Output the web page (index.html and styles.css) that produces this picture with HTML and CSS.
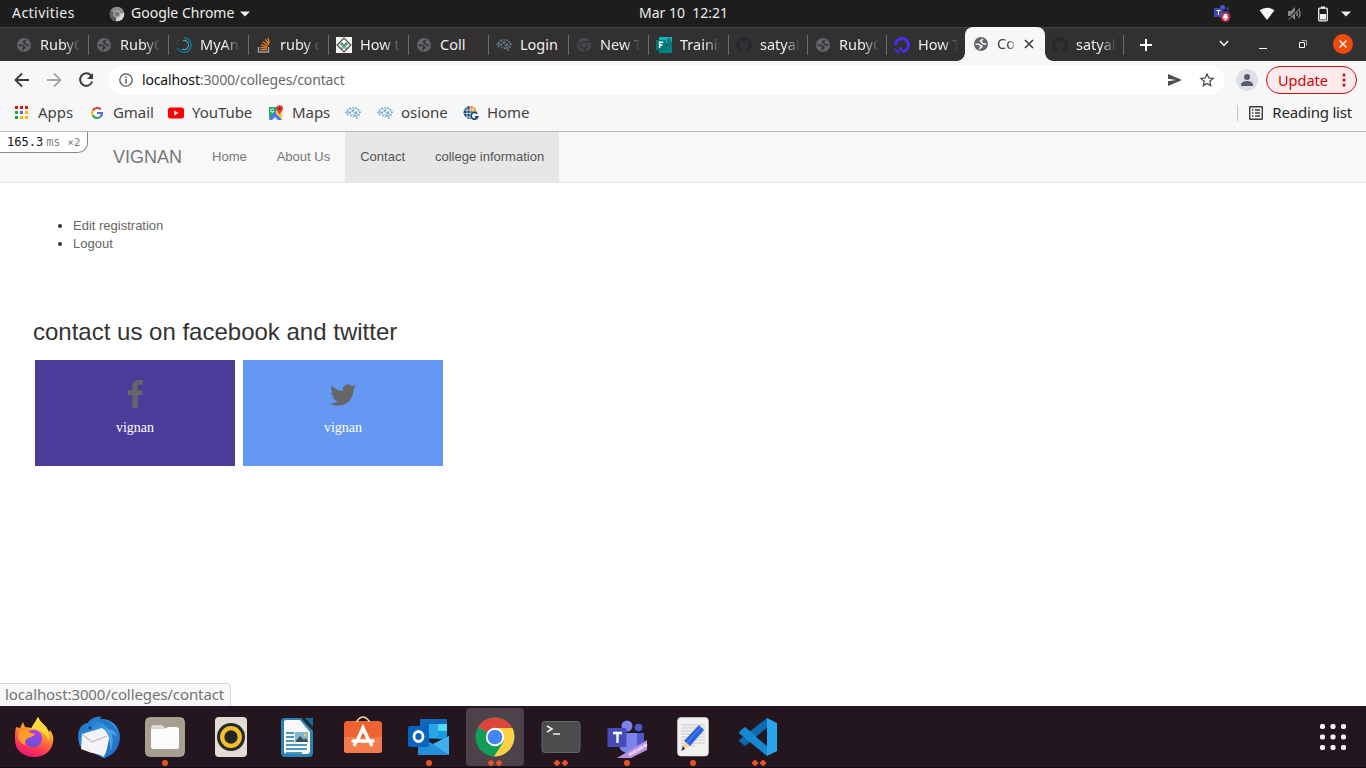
FILE: index.html
```html
<!DOCTYPE html>
<html lang="en">
<head>
<meta charset="utf-8">
<title>Colleges</title>
<link rel="stylesheet" href="styles.css">
</head>
<body>
<svg class="defs" width="0" height="0">
  <symbol id="globe" viewBox="0 0 16 16"><circle cx="8" cy="8" r="7" stroke="none"/><path d="M2.600 8.200h3q1.700 0 1.700 1.500h1.300q.8 1.500-1 1.800-.9.300-.9 2M9.800 2.800q-.8 1.500-2.300 1.700-.4 1.200 1.300 1.500 .4 1.900 2.300 1.900l2.200.4" fill="none" stroke-width="1.500"/></symbol>
  <symbol id="github" viewBox="0 0 16 16"><path d="M8 0C3.580 0 0 3.580 0 8c0 3.540 2.290 6.530 5.470 7.590.4.070.55-.17.55-.38 0-.19-.01-.82-.01-1.490-2.010.37-2.530-.49-2.690-.94-.09-.23-.48-.94-.82-1.130-.28-.15-.68-.52-.01-.53.630-.01 1.080.58 1.230.82.720 1.210 1.870.87 2.330.66.070-.52.280-.87.510-1.070-1.780-.2-3.640-.89-3.640-3.950 0-.87.310-1.590.820-2.150-.08-.2-.36-1.020.08-2.120 0 0 .67-.21 2.200.82.640-.18 1.320-.27 2-.27s1.360.09 2 .27c1.530-1.040 2.200-.82 2.200-.82.440 1.100.160 1.920.080 2.120.510.560.820 1.270.820 2.150 0 3.070-1.870 3.750-3.650 3.950.290.250.540.730.540 1.480 0 1.070-.01 1.930-.01 2.200 0 .210.150.460.550.380A8.010 8.010 0 0 0 16 8c0-4.420-3.580-8-8-8z" fill="#24292f"/></symbol>
  <symbol id="brain" viewBox="0 0 16 16"><g fill="currentColor"><circle cx="1" cy="7.500" r=".8"/><circle cx="2.500" cy="5.500" r=".9"/><circle cx="5" cy="3.500" r=".9"/><circle cx="8" cy="2.700" r=".8"/><circle cx="11" cy="3.200" r=".9"/><circle cx="13.500" cy="4.800" r=".8"/><circle cx="15" cy="7.200" r=".9"/><circle cx="14" cy="9.800" r=".9"/><circle cx="11.500" cy="11" r=".9"/><circle cx="12" cy="13.300" r=".8"/><circle cx="8.700" cy="11.300" r=".9"/><circle cx="6" cy="10.700" r=".8"/><circle cx="2.500" cy="9.500" r=".9"/><circle cx="5" cy="7.500" r="1"/><circle cx="8" cy="5.800" r="1"/><circle cx="11" cy="7.500" r="1"/></g><path d="M1 7.500L5 3.500l3 2.300 3-2.600 4 4-3.500 3.800L8 5.800 5 7.500l-2.500 2M2.500 5.500L5 7.500l1 3.200 5-3.200 2.500-2.700M8 2.700v3.100M8.700 11.300l2.300-3.800 3 2.300M12 13.300l-.5-2.300-2.800.3M1 7.500h4" fill="none" stroke="currentColor" stroke-width=".55"/></symbol>
</svg>

<header class="system-bar">
  <span class="activities">Activities</span>
  <svg class="app-icon" width="16" height="16" viewBox="0 0 16 16"><circle cx="8" cy="8" r="7.300" fill="#8b8b8b"/><path d="M8 8L1.500 4.500A7.300 7.300 0 0 0 7 15.200z" fill="#606060"/><path d="M8 8l7.200-1A7.300 7.300 0 0 1 7 15.200z" fill="#d5d5d5"/><circle cx="8" cy="8" r="3.600" fill="#bbb"/><circle cx="8" cy="8" r="2.600" fill="#777"/></svg>
  <span class="app-name">Google Chrome</span>
  <svg width="10" height="6" viewBox="0 0 10 6"><path d="M0 .5h10L5 5.500z" fill="#f2f2f2"/></svg>
  <time class="clock">Mar 10&nbsp; 12:21</time>
  <div class="tray">
    <svg class="tray-teams" width="17" height="17" viewBox="0 0 17 17"><circle cx="8.500" cy="2.600" r="2.500" fill="#5059c9"/><circle cx="13.500" cy="3.500" r="1.600" fill="#353b8d"/><path d="M7 6h8v6H7z" fill="#30357c"/><rect y="3" width="9" height="9" rx=".8" fill="#4046b3"/><path d="M2.500 5.500h4M4.500 5.500v4.500" stroke="#fff" stroke-width="1.100"/><circle cx="11.500" cy="12" r="4.800" fill="#c4314b"/><path d="M8.600 13.400c1-1 .5-4.600 2.900-4.600s1.900 3.600 2.900 4.600zM10.400 14h2.200v1.200h-2.200z" fill="#fff"/></svg>
    <svg class="tray-wifi" width="16" height="14" viewBox="0 0 16 14"><path d="M.5 3.300Q8-1.800 15.500 3.300L8 13z" fill="#f5f5f5"/></svg>
    <svg class="tray-mute" width="16" height="15" viewBox="0 0 16 15"><path d="M1 5h3l4-4v13l-4-4H1z" fill="#858585"/><path d="M9.500 5q2 2.500 0 5M11.500 3q3 4.500 0 9" fill="none" stroke="#858585" stroke-width="1.200"/><path d="M1 13.500L13 1" stroke="#1d1d1d" stroke-width="1.600"/><path d="M1.500 14L13 2" stroke="#858585"/></svg>
    <svg class="tray-battery" width="10" height="16" viewBox="0 0 10 16"><path d="M3 .5h4v2H3z" fill="#f2f2f2"/><rect x=".7" y="2.200" width="8.600" height="12.600" rx="1" fill="none" stroke="#f2f2f2" stroke-width="1.300"/><path d="M2 8h6v5.500H2z" fill="#f2f2f2"/></svg>
    <svg width="10" height="6" viewBox="0 0 10 6"><path d="M0 .5h10L5 5.500z" fill="#f2f2f2"/></svg>
  </div>
</header>

<nav class="tab-strip">
  <div class="tab"><svg class="fav globe"><use href="#globe"/></svg><span>RubyOn</span></div>
  <div class="tab"><svg class="fav globe"><use href="#globe"/></svg><span>RubyOn</span></div>
  <div class="tab"><svg class="fav" viewBox="0 0 16 16" fill="none" stroke="#087b90"><path d="M8 .8a7.200 7.200 0 1 1-6.700 10" stroke-width="1.400"/><path d="M7 3.500a4.600 4.600 0 1 1-1 8.600" stroke="#56a0b0" stroke-width="1.100"/><path d="M1 8a7 7 0 0 1 3-6" stroke="#35545e"/></svg><span>MyAna</span></div>
  <div class="tab"><svg class="fav" viewBox="0 0 16 16" fill="none"><path d="M2.500 10v5h10v-5" stroke="#9b9da0" stroke-width="1.500"/><path d="M4.300 12.600h6.500M4.400 10.300l6.500.8M5.200 7.600l6 2.200M6.800 4.800l5.200 3.700M9.300 2.300l3.700 5M12 .8l1.200 5.500" stroke="#f48024" stroke-width="1.300"/></svg><span>ruby on</span></div>
  <div class="tab"><svg class="fav" viewBox="0 0 16 16"><path d="M0 0h16v16H0z" fill="#f5f5f2"/><path d="M8 1.200L14.800 8 8 14.800 1.200 8z" fill="#fff" stroke="#404943" stroke-width="1.200"/><path d="M4.500 7.200l3.500 3 3.500-3-1-1.500-2.500 2-2.500-2zM5 11h6" fill="#6aaf8b" stroke="#246448" stroke-width=".8"/></svg><span>How to</span></div>
  <div class="tab"><svg class="fav globe"><use href="#globe"/></svg><span>Coll</span></div>
  <div class="tab"><svg class="fav brain-dark"><use href="#brain"/></svg><span>Login</span></div>
  <div class="tab"><svg class="fav" viewBox="0 0 16 16"><circle cx="8" cy="8" r="7" fill="#45484d"/><g fill="none" stroke="#333031" stroke-width="1.200"><circle cx="8" cy="8" r="3.400"/><path d="M8 4.600h6.300M5 9.600L2 4.400M11 9.600L8 15"/></g></svg><span>New Tab</span></div>
  <div class="tab"><svg class="fav" viewBox="0 0 16 16"><path d="M3 0h13v7H3z" fill="#10b4bd"/><path d="M11 5h5v6h-5z" fill="#0d7378"/><path d="M3 10h13v6H3z" fill="#078386"/><circle cx="13" cy="3.500" r="2.200" fill="#177c82"/><path d="M0 3h10v10H0z" fill="#00797c"/><path d="M3.600 11V5.200h3.700M3.600 8h3" fill="none" stroke="#fff" stroke-width="1.400"/></svg><span>Trainin</span></div>
  <div class="tab narrow"><svg class="fav"><use href="#github"/></svg><span>satyak</span></div>
  <div class="tab narrow"><svg class="fav globe"><use href="#globe"/></svg><span>RubyOn</span></div>
  <div class="tab narrow before-active"><svg class="fav" viewBox="0 0 16 16"><path d="M1.500 8A6.500 6.500 0 1 1 8 14.500" fill="none" stroke="#4b2df2" stroke-width="3"/><path d="M5 10.500h3v3H5zM2.500 13.500H5V16H2.500zM.5 11.500h2v2h-2z" fill="#4b2df2"/></svg><span>How To</span></div>
  <div class="tab active"><svg class="fav globe"><use href="#globe"/></svg><span>Coll</span><svg class="tab-close" width="10" height="10" viewBox="0 0 10 10"><path d="M1 1l8 8M9 1L1 9" stroke="#3c3c3c" stroke-width="1.600"/></svg></div>
  <div class="tab last"><svg class="fav"><use href="#github"/></svg><span>satyak</span></div>
  <svg class="new-tab" width="12" height="12" viewBox="0 0 12 12"><path d="M6 0v12M0 6h12" stroke="#fff" stroke-width="2"/></svg>
  <div class="window-controls">
    <svg width="10" height="7" viewBox="0 0 10 7"><path d="M.8 1L5 5.400 9.200 1" fill="none" stroke="#eee" stroke-width="1.600"/></svg>
    <svg width="8" height="8" viewBox="0 0 8 8"><path d="M0 6.500h8" stroke="#fff"/></svg>
    <svg width="8" height="8" viewBox="0 0 8 8" fill="none"><path d="M.5 2.500h5v5h-5z" stroke="#fff"/><path d="M2.500.5h5v5" stroke="#aaa"/></svg>
    <svg width="20" height="20" viewBox="0 0 20 20"><circle cx="10" cy="10" r="10" fill="#f04b06"/><path d="M6.500 6.500l7 7M13.500 6.500l-7 7" stroke="#fff" stroke-width="1.400"/></svg>
  </div>
</nav>

<div class="toolbar">
  <svg class="back" width="16" height="16" viewBox="0 0 16 16" fill="none" stroke="#3b3b3b" stroke-width="1.800"><path d="M15 8H2M8 1.500L1.500 8 8 14.500"/></svg>
  <svg class="forward" width="16" height="16" viewBox="0 0 16 16" fill="none" stroke="#a7a7a7" stroke-width="1.800"><path d="M1 8h13M8 1.500L14.500 8 8 14.500"/></svg>
  <svg class="reload" width="16" height="16" viewBox="0 0 16 16"><path d="M13 3.500A6.200 6.200 0 1 0 14.200 9.500" fill="none" stroke="#3b3b3b" stroke-width="2"/><path d="M15 1v6H9z" fill="#3b3b3b"/></svg>
  <div class="omnibox">
    <svg width="14" height="14" viewBox="0 0 14 14"><circle cx="7" cy="7" r="6.200" fill="none" stroke="#565656" stroke-width="1.300"/><path d="M7 6v4.500M7 3.300v1.500" stroke="#565656" stroke-width="1.500"/></svg>
    <span class="url"><b>localhost</b>:3000/colleges/contact</span>
    <svg class="send" width="14" height="12" viewBox="0 0 14 12"><path d="M0 0l14 6-14 6V7.300L8 6 0 4.700z" fill="#4c4c4c"/></svg>
    <svg class="star" width="16" height="16" viewBox="0 0 16 16"><path d="M8 2l1.800 4 4.300.4-3.300 2.900.9 4.300L8 11.400l-3.700 2.200.9-4.300-3.300-2.900L6.200 6z" fill="none" stroke="#4b4b4b" stroke-width="1.300"/></svg>
  </div>
  <svg class="profile" width="22" height="22" viewBox="0 0 22 22"><circle cx="11" cy="11" r="11" fill="#dfe0e5"/><circle cx="11" cy="8" r="3" fill="#565b72"/><path d="M5 17v-1.500c0-2.500 4-3.500 6-3.500s6 1 6 3.500V17z" fill="#565b72"/></svg>
  <div class="update"><span>Update</span><svg width="4" height="14" viewBox="0 0 4 14" fill="#d1060b"><circle cx="2" cy="2" r="1.500"/><circle cx="2" cy="7" r="1.500"/><circle cx="2" cy="12" r="1.500"/></svg></div>
</div>

<div class="bookmarks">
  <a><svg viewBox="0 0 16 16"><path d="M1 1h3v3H1zM6 1h3v3H6zM11 1h3v3h-3z" fill="#f00d12"/><path d="M1 6h3v3H1z" fill="#12a63e"/><path d="M6 6h3v3H6z" fill="#5865f2"/><path d="M11 6h3v3h-3zM6 11h3v3H6zM11 11h3v3h-3z" fill="#f9b90a"/><path d="M1 11h3v3H1z" fill="#12a63e"/></svg><span>Apps</span></a>
  <a><svg viewBox="0 0 16 16" fill="none" stroke-width="2.200"><circle cx="8" cy="8" r="8" fill="#fff"/><path d="M11.800 4.500A5 5 0 0 0 3.700 5.700" stroke="#ea4335"/><path d="M3.700 5.700a5 5 0 0 0 0 4.700" stroke="#fbbc05"/><path d="M3.700 10.400a5 5 0 0 0 7.200 1.700" stroke="#34a853"/><path d="M8 8h5a5 5 0 0 1-2.100 4.100" stroke="#4d68f4"/></svg><span>Gmail</span></a>
  <a><svg viewBox="0 0 16 16"><rect y="2.500" width="16" height="11" rx="2.500" fill="#f00"/><path d="M6.200 5.500v5L10.500 8z" fill="#fff"/></svg><span>YouTube</span></a>
  <a class="maps"><svg viewBox="0 0 16 16"><path d="M1 2h13v13H1z" fill="#e4e8ec"/><path d="M1 2h9l-3 7-6 5z" fill="#28a766"/><path d="M1 14l6-7 7 8H2z" fill="#4b77ed"/><path d="M4 15l3-3 3 3z" fill="#f3f3f3"/><path d="M10 4l4 4v6L8 8z" fill="#fac61c"/><path d="M11.500 10C11 7.500 8.200 6.200 8.200 3.600a3.400 3.400 0 0 1 6.800 0C15 6.200 12 7.500 11.500 10z" fill="#e33b32"/><circle cx="11.600" cy="3.600" r="1.200" fill="#861e18"/><path d="M5.800 4.500a1.700 1.700 0 1 0 .2 1.700H4.500" fill="none" stroke="#fff"/></svg><span>Maps</span></a>
  <a><svg class="brain-light"><use href="#brain"/></svg></a>
  <a><svg class="brain-light"><use href="#brain"/></svg><span>osione</span></a>
  <a><svg viewBox="0 0 16 16"><circle cx="7" cy="7.500" r="6.500" fill="#19477b"/><path d="M7 1a6.500 6.500 0 0 1 6.300 5.500H7z" fill="#f5961e"/><path d="M1 5h11M.5 8.500h9M2 12h7M4 2v11M7 1v13M10 2v7" stroke="#f7f7f7" stroke-width=".7"/><circle cx="11.500" cy="11" r="4.500" fill="#f7f7f7"/><path d="M14.200 8.800a3.400 3.400 0 1 0 .5 3H12" fill="none" stroke="#19477b" stroke-width="1.700"/></svg><span>Home</span></a>
  <a class="reading"><svg viewBox="0 0 16 16" fill="none" stroke="#3c3c3c"><rect x="1.700" y="1.700" width="12.600" height="12.600" rx=".5" stroke-width="1.400"/><path d="M4 5h1.500M7 5h5M4 8h1.500M7 8h5M4 11h1.500M7 11h5" stroke-width="1.400"/></svg><span>Reading list</span></a>
</div>

<main class="page">
  <nav class="navbar">
    <a class="brand">VIGNAN</a>
    <a>Home</a>
    <a>About Us</a>
    <a class="current">Contact</a>
    <a class="current">college information</a>
  </nav>
  <div class="profiler">165.3<span class="unit">ms</span><span class="count">×2</span></div>
  <ul class="account">
    <li><a>Edit registration</a></li>
    <li><a>Logout</a></li>
  </ul>
  <h3>contact us on facebook and twitter</h3>
  <div class="cards">
    <div class="card facebook"><svg width="15" height="28" viewBox="479 0 864 1664" preserveAspectRatio="none"><path d="M1343 12v264h-157q-86 0-116 36t-30 108v189h293l-39 296h-254v759h-306v-759h-255v-296h255v-218q0-186 104-288.500t277-102.500q147 0 228 12z" fill="#666"/></svg><p>vignan</p></div>
    <div class="card twitter"><svg width="26" height="28" viewBox="0 -40 512 552"><path d="M459.370 151.716c.325 4.548.325 9.097.325 13.645 0 138.720-105.583 298.558-298.558 298.558-59.452 0-114.680-17.219-161.137-47.106 8.447.974 16.568 1.299 25.340 1.299 49.055 0 94.213-16.568 130.274-44.832-46.132-.975-84.792-31.188-98.112-72.772 6.498.974 12.995 1.624 19.818 1.624 9.421 0 18.843-1.300 27.614-3.573-48.081-9.747-84.143-51.980-84.143-102.985v-1.299c13.969 7.797 30.214 12.670 47.431 13.319-28.264-18.843-46.781-51.005-46.781-87.391 0-19.492 5.197-37.360 14.294-52.954 51.655 63.675 129.300 105.258 216.365 109.807-1.624-7.797-2.599-15.918-2.599-24.040 0-57.828 46.782-104.934 104.934-104.934 30.213 0 57.502 12.670 76.670 33.137 23.715-4.548 46.456-13.320 66.599-25.340-7.798 24.366-24.366 44.833-46.132 57.827 21.117-2.273 41.584-8.122 60.426-16.243-14.292 20.791-32.161 39.308-52.628 54.253z" fill="#666"/></svg><p>vignan</p></div>
  </div>
  <div class="status">localhost:3000/colleges/contact</div>
</main>

<footer class="dock">
  <div class="launcher"><svg viewBox="0 0 44 44"><defs><linearGradient id="ff" x1=".75" y1="0" x2=".35" y2="1"><stop stop-color="#ffee46"/><stop offset=".4" stop-color="#ff9a27"/><stop offset=".7" stop-color="#ff4350"/><stop offset="1" stop-color="#e91577"/></linearGradient><linearGradient id="fp" x1=".7" y1="0" x2=".2" y2="1"><stop stop-color="#b63af2"/><stop offset="1" stop-color="#5a56d6"/></linearGradient></defs><path d="M5 12l4 1 3-6 2 5 7 1c2-1 4-6 6-11 2 5 7 8 9 11l2 4 1-2c3 4 4 8 3 12-1 9-9 15-19 15-11 0-19-7-19-17 0-5 0-9 1-13z" fill="url(#ff)"/><path d="M20 14c2-5 5-8 7-12 2 5 7 8 9 12 2 4 3 8 2 12-3-8-9-12-18-12z" fill="#ffd83b"/><circle cx="22.500" cy="23.500" r="8.700" fill="url(#fp)"/><path d="M8 16c4-1 7-1 10 1l6 2c-1 3-5 3-7 4-3 2-4 4-2 7-5-1-8-5-8-9z" fill="#ff9f27"/></svg></div>
  <div class="launcher"><svg viewBox="0 0 44 44"><defs><linearGradient id="tb" x1="0" y1="0" x2="1" y2="1"><stop stop-color="#1c65c0"/><stop offset=".5" stop-color="#369be2"/><stop offset="1" stop-color="#153e9d"/></linearGradient></defs><path d="M3 31C-2 17 4 8 11 8c2-5 9-7 14-6l-3 2c12-1 21 7 21 18 0 12-8 20-17 21z" fill="url(#tb)"/><path d="M5 19L25 13l8 6-5 24c-6-5-11-4-16-6l-8-3z" fill="#f4f3f7"/><path d="M5 19l10 8 15-6" fill="none" stroke="#c4c5d1" stroke-width="1.500"/><path d="M7 20C6 8 15 4 25 8c10 5 12 16 1 35 14-4 18-16 14-26C36 6 26 2 17 6 9 8 5 13 7 20z" fill="#2477ca"/><path d="M27 14c8-1 12 3 13 8-2-2-4-3-6-3 3 5 2 12-1 17 1-9-1-16-6-22z" fill="#49a3df"/><circle cx="13" cy="13" r="1.400" fill="#103a6d"/></svg></div>
  <div class="launcher one"><svg viewBox="0 0 44 44"><rect x="2.700" y="2.700" width="38.600" height="38.600" rx="4" fill="#a69e8e" stroke="#bab3a4"/><path d="M8 13q0-3 3-3h8l3 3h12v6H8z" fill="#dcd9ce"/><path d="M8 16q0-2 3-2h11l3-2h8q3 0 3 3v17q0 2-2 2H10q-2 0-2-2z" fill="#fbfbfb"/></svg></div>
  <div class="launcher"><svg viewBox="0 0 44 44"><rect x="6" y="2" width="32" height="40" rx="4" fill="#e1ddd2"/><circle cx="22" cy="22" r="14" fill="#27282a"/><circle cx="22" cy="22" r="8.800" fill="none" stroke="#f3bf2a" stroke-width="4.200"/><circle cx="22" cy="22" r="4.500" fill="#242424"/></svg></div>
  <div class="launcher"><svg viewBox="0 0 44 44"><rect x="6" y="3" width="32" height="39" rx="4" fill="#2a82b2"/><path d="M9 7q0-2 2-2h14l10 12v19q0 3-3 3H12q-3 0-3-3z" fill="#f8f8f8"/><path d="M26 3l12 13V3z" fill="#212529"/><path d="M30 3h8v9z" fill="#166b9b"/><path d="M11 18h8M11 22h8M11 26h8M11 30h21M11 34h21M11 38h16" stroke="#1876a8" stroke-width="1.500"/><path d="M20 17h13v10H20z" fill="#7bb5db"/><path d="M20 27l5-6 4 4 2-2 2 4z" fill="#3f4b50"/><circle cx="30" cy="20" r="1.500" fill="#ffc344"/></svg></div>
  <div class="launcher"><svg viewBox="0 0 44 44"><rect x="3" y="6" width="38" height="32" rx="3.500" fill="#ef6333"/><path d="M3 22h38v13q0 3-3 3H6q-3 0-3-3z" fill="#f47b4b"/><path d="M16 7v-1q6-8 12 0v1" fill="none" stroke="#efd59e" stroke-width="1.700"/><path d="M16 26l6-13 6 13M12 26h20" fill="none" stroke="#fff" stroke-width="3.500" stroke-linecap="round"/><path d="M15 27l-2 4M29 27l2 4" stroke="#fff" stroke-width="3"/></svg></div>
  <div class="launcher one"><svg viewBox="0 0 44 44"><path d="M13 4h27v20H13z" fill="#1167b9"/><path d="M22 9h9v14h-9z" fill="#28a7e5"/><path d="M31 9h9v7h-9z" fill="#51d8f3"/><path d="M31 16h9v8h-9z" fill="#189bdd"/><path d="M11 20l15 9 16-8v16q0 3-3 3H11z" fill="#238fdb"/><path d="M26 29l16-8v19z" fill="#43aeec"/><rect x="1" y="11" width="21" height="21" rx="2" fill="#0763bd"/><ellipse cx="11.500" cy="21.500" rx="4.500" ry="5" fill="none" stroke="#fff" stroke-width="2.800"/></svg></div>
  <div class="launcher two selected"><svg viewBox="0 0 44 44"><circle cx="22" cy="22" r="19.500" fill="#129e59"/><path d="M22 22L5 12a20 20 0 0 1 34 0z" fill="#dd463a"/><path d="M22 13h17.500A20 20 0 0 1 21 41.500L31 26z" fill="#ffd043"/><circle cx="22" cy="22" r="9.200" fill="#fff"/><circle cx="22" cy="22" r="7.300" fill="#4285f4"/></svg></div>
  <div class="launcher two"><svg viewBox="0 0 44 44"><rect x="3" y="6.500" width="38" height="31" rx="3" fill="#4c4c4c" stroke="#5d6961"/><path d="M8 11l5 3-5 3M14 19h7" fill="none" stroke="#eee" stroke-width="1.600"/></svg></div>
  <div class="launcher one"><svg viewBox="0 0 44 44"><circle cx="22" cy="11" r="5.500" fill="#7b83eb"/><circle cx="33.500" cy="12.500" r="3.800" fill="#5059c9"/><path d="M28 18h11v12l-7 7z" fill="#5059c9"/><path d="M14 18h18v12q0 8-8 8-9 0-10-8z" fill="#7b83eb"/><rect x="2.500" y="13" width="19" height="19" rx="1.500" fill="#464cb7"/><path d="M8 18h9M12.500 18v10" stroke="#fff" stroke-width="2.300"/><path d="M12 43l30-18v10L26 43z" fill="#b990e4"/><text class="ribbon" transform="translate(25 41.500) rotate(-31)">PREVIEW</text></svg></div>
  <div class="launcher one"><svg viewBox="0 0 44 44"><rect x="6.300" y="2.300" width="31.400" height="39" rx="4" fill="#f1f1f0"/><path d="M10 10h24M10 13h24M10 16h24M10 19h24M10 22h24M10 25h24M10 28h24M10 31h14" stroke="#c8c8c8"/><path d="M28 10l5 5-14 16-6-5z" fill="#2964df"/><path d="M30 12L16 28" stroke="#5791ff"/><path d="M13 26l6 5-8 4z" fill="#ffd0a2"/><path d="M12 31l2 3-4 2z" fill="#2a3343"/></svg></div>
  <div class="launcher two"><svg viewBox="0 0 44 44"><path d="M30 3v10L8 31l-5-4q-2-1 0-3z" fill="#0b69ad"/><path d="M8 12l22 18v11L3 19q-2-1 0-3z" fill="#1688cf"/><path d="M30 3l10 5v28l-10 5z" fill="#27a5ed"/><path d="M30 13v18l-11-9z" fill="#24161f"/></svg></div>
  <svg class="app-grid" width="28" height="28" viewBox="0 0 28 28" fill="#f2f2f2"><g id="dots"><rect x="1" y="1" width="5" height="5" rx="1.700"/><rect x="11.500" y="1" width="5" height="5" rx="1.700"/><rect x="22" y="1" width="5" height="5" rx="1.700"/></g><use href="#dots" y="10.500"/><use href="#dots" y="21"/></svg>
</footer>
</body>
</html>
```
FILE: styles.css
```css
* { box-sizing: border-box; }

body {
  margin: 0;
  width: 1366px;
  height: 768px;
  overflow: hidden;
  display: flex;
  flex-direction: column;
  font: 14.5px/20px "Noto Sans", sans-serif;
  background: #fff;
}

svg { display: block; flex: none; }
.defs { position: absolute; }

/* System bar */
.system-bar {
  height: 27px;
  flex: none;
  display: grid;
  grid-template-columns: 97px 22px 109px 399px 1fr auto;
  align-items: center;
  padding: 0 15px 0 12px;
  background: #1d1d1d;
  color: #eee;
  font-size: 14px;
  white-space: nowrap;
}
.system-bar span, .clock { padding-bottom: 2px; }
.activities { letter-spacing: .45px; }
.app-name { letter-spacing: 0; }
.tray { display: flex; align-items: center; }
.tray-teams { margin-right: 28px; }
.tray-wifi { margin-right: 12px; }
.tray-mute { margin-right: 15px; }
.tray-battery { margin-right: 13px; }

/* Tabs */
.tab-strip {
  height: 34px;
  flex: none;
  display: flex;
  align-items: center;
  padding-left: 9px;
  background: #333031;
  border-top: 1px solid #454344;
}
.tab {
  width: 80px;
  height: 20px;
  flex: none;
  display: flex;
  align-items: center;
  padding-left: 7px;
  border-right: 1px solid #6c6a6b;
  color: #eee;
}
.tab.narrow { width: 79px; }
.tab.before-active { width: 78px; border-right: 0; }
.tab.last { width: 79px; }
.tab span {
  width: 41px;
  margin-left: 8px;
  padding-bottom: 2px;
  overflow: hidden;
  white-space: nowrap;
  mask-image: linear-gradient(90deg, #000 60%, transparent 98%);
}
.tab:nth-child(6) span, .tab:nth-child(7) span { mask-image: none; }
.fav { width: 16px; height: 16px; }
.globe { fill: #62656b; stroke: #333031; }
.brain-dark { color: #638499; }
.brain-light { color: #68a4cb; }
.tab.active {
  position: relative;
  height: 34px;
  margin-top: -1px;
  padding-left: 8px;
  border: 0;
  border-radius: 8px 8px 0 0;
  background: #f7f7f7;
  color: #414141;
}
.active .globe { stroke: #f7f7f7; }
.tab.active span { width: 20px; }
.tab.active::before, .tab.active::after {
  content: "";
  position: absolute;
  bottom: 0;
  width: 8px;
  height: 8px;
}
.tab.active::before { left: -8px; background: radial-gradient(circle at 0 0, transparent 7.500px, #f7f7f7 8px); }
.tab.active::after { right: -8px; background: radial-gradient(circle at 100% 0, transparent 7.500px, #f7f7f7 8px); }
.tab-close { margin-left: 7px; }
.new-tab { margin-left: 16px; }
.window-controls {
  flex: 1;
  display: flex;
  align-items: center;
  justify-content: flex-end;
  padding: 0 13px 2px 0;
}
.window-controls svg:nth-child(2) { margin-left: 30px; margin-top: 4px; }
.window-controls svg:nth-child(3) { margin-left: 32px; }
.window-controls svg:nth-child(4) { margin-left: 26px; }

/* Address row */
.toolbar {
  height: 38px;
  flex: none;
  display: flex;
  align-items: center;
  padding: 0 9px 0 14px;
  background: #f7f7f7;
}
.forward, .reload { margin-left: 16px; }
.omnibox {
  flex: 1;
  height: 30px;
  margin-left: 14px;
  padding: 0 10px 0 11px;
  display: flex;
  align-items: center;
  border-radius: 15px;
  background: #fff;
}
.url { margin-left: 9px; color: #696969; font-size: 14px; letter-spacing: -.15px; }
.url b { color: #111; font-weight: 400; }
.send { margin-left: auto; }
.star { margin-left: 17px; }
.profile { margin-left: 11px; }
.update {
  width: 91px;
  height: 28px;
  margin-left: 8px;
  padding: 0 10px 0 11px;
  display: flex;
  align-items: center;
  justify-content: space-between;
  border: 1px solid #d1060b;
  border-radius: 14px;
  background: #fce9e9;
  color: #c90b10;
}
.update span { padding-bottom: 1px; }

/* Bookmarks */
.bookmarks {
  height: 33px;
  flex: none;
  display: grid;
  grid-template-columns: 75px 79px 100px 77px 32px 86px 1fr auto;
  align-items: center;
  padding: 0 14px 5px;
  background: #f7f7f7;
  border-bottom: 1px solid #b8bab8;
  color: #424242;
  font-size: 15px;
}
.bookmarks a { display: flex; gap: 8px; align-items: center; white-space: nowrap; }
.bookmarks a span { padding-bottom: 2px; letter-spacing: -.05px; }
.bookmarks svg { width: 16px; height: 16px; }
.bookmarks .reading { padding-left: 10px; height: 16px; border-left: 1px solid #c3c3c3; color: #282828; }
.bookmarks .reading span { letter-spacing: -.2px; }

/* Page */
.page {
  flex: 1;
  position: relative;
  font: 13px/18px "Liberation Sans", sans-serif;
  color: #333;
}
.navbar {
  height: 51px;
  display: flex;
  padding-left: 98px;
  background: #f8f8f8;
  border-bottom: 1px solid #e7e7e7;
  color: #777;
}
.navbar a { padding: 15px; line-height: 20px; }
.navbar .brand { font-size: 18px; }
.navbar .current { background: #e7e7e7; color: #555; }
.profiler {
  position: absolute;
  left: 0;
  top: 0;
  width: 88px;
  height: 21px;
  padding-left: 7px;
  border: solid #888;
  border-width: 0 1px 1px 0;
  border-radius: 0 0 10px 0;
  background: #fff;
  color: #111;
  font: 12px/20px "DejaVu Sans Mono", monospace;
}
.unit { margin-left: 3px; color: #888; }
.count { margin-left: 7px; color: #777; font-size: 10.5px; }
.account { margin: 34px 0 0; padding-left: 73px; }
.account a { color: #666; }
h3 { margin: 66px 0 15px 33px; font-size: 24px; line-height: 26px; font-weight: 400; }
.cards { display: flex; gap: 8px; padding-left: 35px; }
.card {
  width: 200px;
  height: 106px;
  padding-top: 20px;
  display: flex;
  flex-direction: column;
  align-items: center;
}
.facebook { background: #4b3c9a; }
.twitter { background: #6498f3; }
.card p { margin: 10px 0 0; color: #fff; font: 14px/20px "Liberation Serif", serif; }
.status {
  position: absolute;
  left: 0;
  bottom: 0;
  height: 23px;
  width: 231px;
  padding-left: 5px;
  border: solid #d5d5d5;
  border-width: 1px 1px 0 0;
  border-radius: 0 4px 0 0;
  background: #f7f7f7;
  color: #737373;
  font: 15px/21px "Noto Sans", sans-serif;
  letter-spacing: -.1px;
}

/* Dock */
.dock {
  height: 62px;
  flex: none;
  display: flex;
  align-items: center;
  background: #24161f;
  border-bottom: 1px solid #150b12;
}
.launcher {
  width: 58px;
  height: 58px;
  margin: 0 4px;
  display: flex;
  flex-direction: column;
  align-items: center;
  padding-top: 7px;
  border-radius: 4px;
}
.launcher svg { width: 44px; height: 44px; }
.selected { background: #4d414a; }
.launcher.one::after, .launcher.two::after {
  content: "";
  width: 6px;
  height: 6px;
  margin-top: 1px;
  border-radius: 50%;
  background: #ee5220;
}
.launcher.two::after {
  width: 14px;
  border-radius: 0;
  background: radial-gradient(circle at 3px 3px, #ee5220 2.500px, transparent 3px), radial-gradient(circle at 11px 3px, #ee5220 2.500px, transparent 3px);
}
.ribbon { font: bold 4.500px "Liberation Sans", sans-serif; fill: #fff; }
.app-grid { margin-left: auto; margin-right: 19px; }
```
